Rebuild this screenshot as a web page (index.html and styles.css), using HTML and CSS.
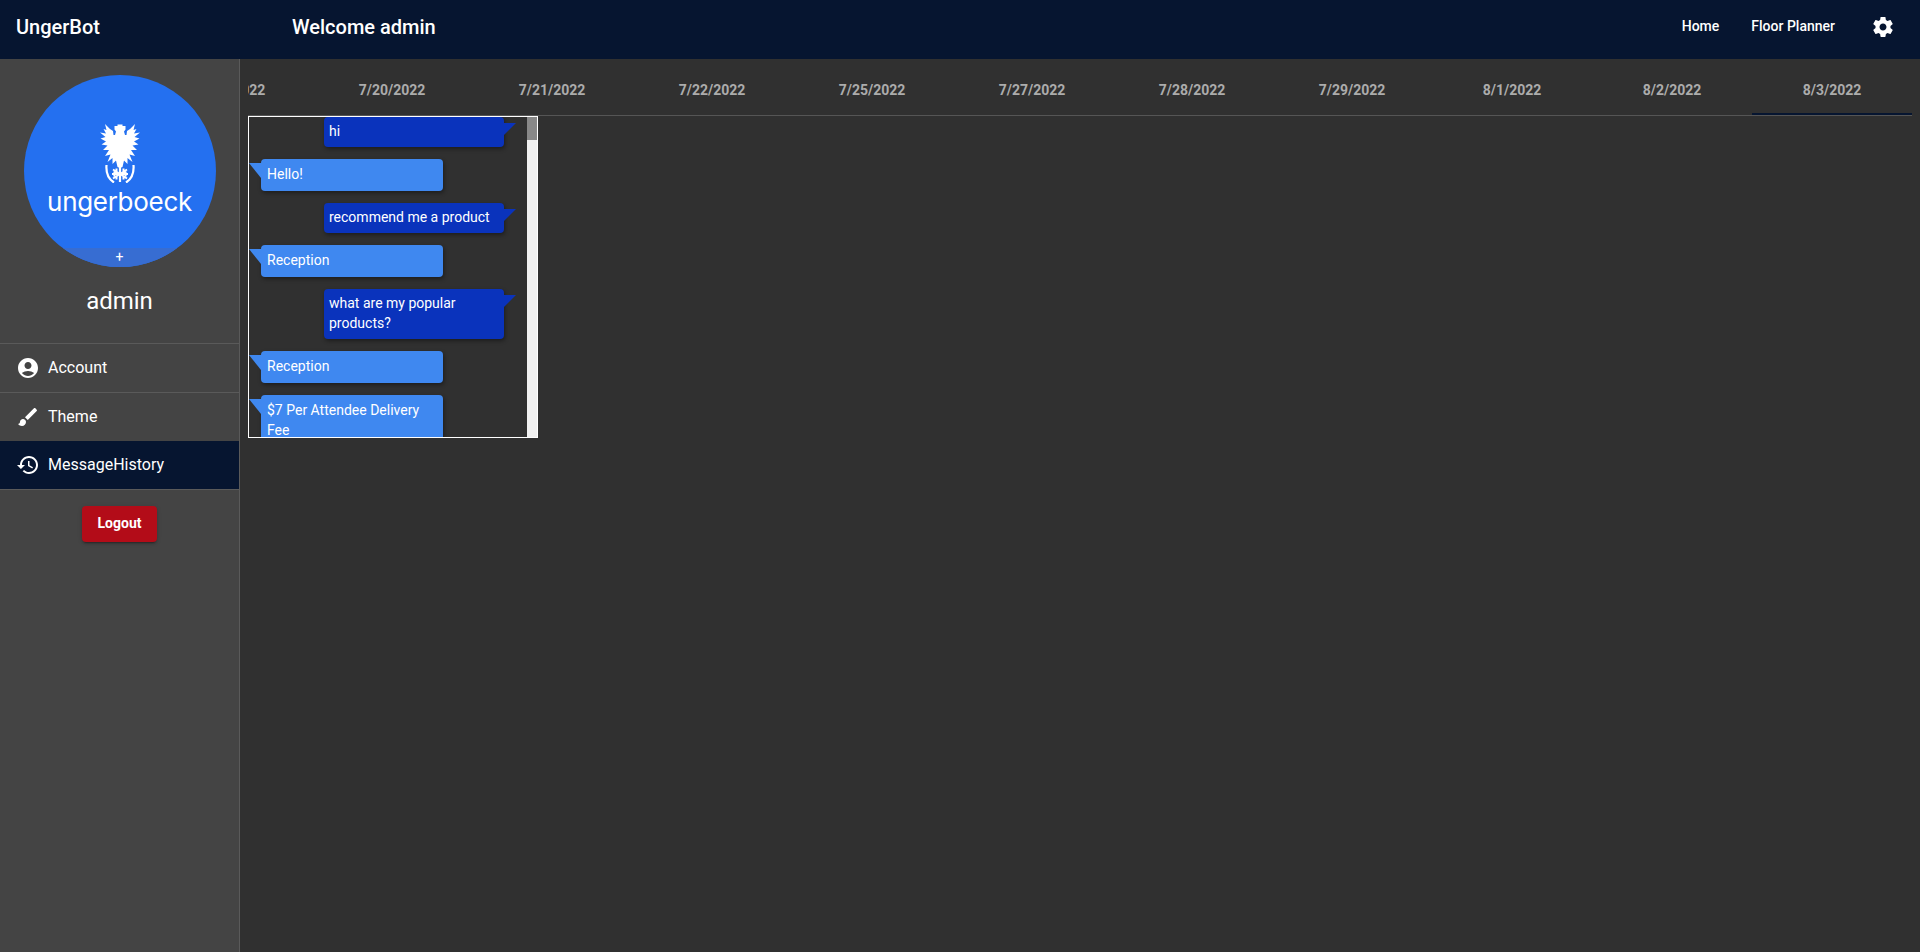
FILE: index.html
```html
<!doctype html>
<html lang="en">
<head>
  <meta charset="UTF-8"/>
  <meta name="viewport" content="width=device-width, initial-scale=1.0"/>
  <title>UngerBot</title>
  <link rel="stylesheet" href="styles.css">
</head>
<body>
  <header class="topbar">
    <div class="brand">UngerBot</div>
    <div class="welcome">Welcome admin</div>
    <nav class="top-links">
      <a class="top-link">Home</a>
      <a class="top-link">Floor Planner</a>
      <svg class="gear" viewBox="0 0 24 24"><path d="M19.43 12.98c.04-.32.07-.64.07-.98s-.03-.66-.07-.98l2.11-1.65c.19-.15.24-.42.12-.64l-2-3.46c-.12-.22-.39-.3-.61-.22l-2.49 1c-.52-.4-1.08-.73-1.69-.98l-.38-2.65C14.46 2.18 14.25 2 14 2h-4c-.25 0-.46.18-.49.42l-.38 2.65c-.61.25-1.17.59-1.69.98l-2.49-1c-.23-.09-.49 0-.61.22l-2 3.46c-.13.22-.07.49.12.64l2.11 1.65c-.04.32-.07.65-.07.98s.03.66.07.98l-2.11 1.65c-.19.15-.24.42-.12.64l2 3.46c.12.22.39.3.61.22l2.49-1c.52.4 1.08.73 1.69.98l.38 2.65c.03.24.24.42.49.42h4c.25 0 .46-.18.49-.42l.38-2.65c.61-.25 1.17-.59 1.69-.98l2.49 1c.23.09.49 0 .61-.22l2-3.46c.12-.22.07-.49-.12-.64l-2.11-1.65zM12 15.5c-1.93 0-3.5-1.57-3.5-3.5s1.57-3.5 3.5-3.5 3.5 1.57 3.5 3.5-1.57 3.5-3.5 3.5z"/></svg>
    </nav>
  </header>

  <div class="page">
    <aside class="sidebar">
      <div class="avatar">
        <svg class="eagle" viewBox="0 0 40 60">
          <defs>
            <g id="eagleHalf">
              <path d="M20 1.500L17.500 1.500L17.500 3L14.500 3L14.500 6.500L16 8.500L15 12L13.500 12L13 8L10 6L5 1L6.500 7L3.500 6L6 10.500L0 9.500L5.500 14L0.500 15.500L6 18.500L1.500 21.500L7.500 22.500L3 27L9 27L5 33L10.500 31.500L7.500 39L12.500 35L12.500 41L16 37.500L17.500 44L20 45Z" fill="#fff"/>
              <path d="M6.500 42Q5.500 54 14 59.500" fill="none" stroke="#fff" stroke-width="2.200"/>
              <path d="M20 51L13 46.500M20 51L13 55.500M20 51L12 51M16.500 48.500L16.500 45.500M16.500 53.500L16.500 56.500M15 51L14 48.500M15 51L14 53.500" fill="none" stroke="#fff" stroke-width="2"/>
            </g>
          </defs>
          <use href="#eagleHalf"/>
          <use href="#eagleHalf" transform="matrix(-1 0 0 1 40 0)"/>
          <path d="M20 44V59" stroke="#fff" stroke-width="2.200"/>
        </svg>
        <div class="wordmark">ungerboeck</div>
        <div class="avatar-add">+</div>
      </div>
      <div class="username">admin</div>
      <ul class="side-nav">
        <li class="side-item">
          <svg class="side-icon" viewBox="0 0 24 24"><path d="M12 2C6.48 2 2 6.48 2 12s4.48 10 10 10 10-4.48 10-10S17.52 2 12 2zm0 4c1.93 0 3.5 1.57 3.5 3.5S13.93 13 12 13s-3.5-1.57-3.5-3.5S10.07 6 12 6zm0 14c-2.03 0-4.43-.82-6.14-2.88C7.55 15.8 9.68 15 12 15s4.45.8 6.14 2.12C16.43 19.18 14.03 20 12 20z"/></svg>
          <span class="side-label">Account</span>
        </li>
        <li class="side-item">
          <svg class="side-icon" viewBox="0 0 24 24"><path d="M7 14c-1.66 0-3 1.34-3 3 0 1.31-1.16 2-2 2 .92 1.22 2.49 2 4 2 2.21 0 4-1.79 4-4 0-1.66-1.34-3-3-3zm13.71-9.37l-1.34-1.34c-.39-.39-1.02-.39-1.41 0L9 12.25 11.75 15l8.96-8.96c.39-.39.39-1.02 0-1.41z"/></svg>
          <span class="side-label">Theme</span>
        </li>
        <li class="side-item active">
          <svg class="side-icon" viewBox="0 0 24 24"><path d="M13 3c-4.97 0-9 4.03-9 9H1l3.89 3.89.07.14L9 12H6c0-3.87 3.13-7 7-7s7 3.13 7 7-3.13 7-7 7c-1.93 0-3.68-.79-4.94-2.06l-1.42 1.42C8.27 19.99 10.51 21 13 21c4.97 0 9-4.03 9-9s-4.03-9-9-9zm-1 5v5l4.28 2.54.72-1.21-3.5-2.08V8H12z"/></svg>
          <span class="side-label">MessageHistory</span>
        </li>
      </ul>
      <button class="logout">Logout</button>
    </aside>

    <main class="content">
      <div class="tabs">
        <div class="tab">7/19/2022</div>
        <div class="tab">7/20/2022</div>
        <div class="tab">7/21/2022</div>
        <div class="tab">7/22/2022</div>
        <div class="tab">7/25/2022</div>
        <div class="tab">7/27/2022</div>
        <div class="tab">7/28/2022</div>
        <div class="tab">7/29/2022</div>
        <div class="tab">8/1/2022</div>
        <div class="tab">8/2/2022</div>
        <div class="tab selected">8/3/2022</div>
      </div>

      <div class="chat">
        <div class="messages">
          <div class="msg user">hi</div>
          <div class="msg bot">Hello!</div>
          <div class="msg user">recommend me a product</div>
          <div class="msg bot">Reception</div>
          <div class="msg user">what are my popular products?</div>
          <div class="msg bot">Reception</div>
          <div class="msg bot">$7 Per Attendee Delivery Fee</div>
        </div>
        <div class="scrollbar"><div class="thumb"></div></div>
      </div>
    </main>
  </div>
</body>
</html>
```

FILE: styles.css
```css
* {
  box-sizing: border-box;
}

body {
  margin: 0;
  height: 100vh;
  display: flex;
  flex-direction: column;
  overflow: hidden;
  background: #303030;
  color: #fff;
  font-family: Roboto, sans-serif;
}

.topbar {
  height: 59px;
  flex-shrink: 0;
  display: flex;
  align-items: center;
  padding: 0 25px 5px 16px;
  background: #061530;
}

.brand {
  width: 276px;
  font-size: 20px;
  font-weight: 500;
}

.welcome {
  font-size: 20px;
  font-weight: 500;
}

.top-links {
  margin-left: auto;
  display: flex;
  align-items: center;
  font-size: 14px;
  font-weight: 500;
}

.top-link {
  margin-right: 32px;
  margin-bottom: 2px;
}

.top-link + .top-link {
  margin-right: 36px;
}

.gear {
  width: 24px;
  height: 24px;
  fill: #fff;
}

.page {
  flex: 1;
  display: flex;
  min-height: 0;
}

.sidebar {
  width: 240px;
  flex-shrink: 0;
  display: flex;
  flex-direction: column;
  align-items: center;
  padding-top: 16px;
  background: #444;
  border-right: 1px solid #5a5a5a;
}

.avatar {
  position: relative;
  width: 192px;
  height: 192px;
  flex-shrink: 0;
  display: flex;
  flex-direction: column;
  align-items: center;
  padding-top: 48px;
  border-radius: 50%;
  overflow: hidden;
  background: #2470f0;
}

.eagle {
  width: 40px;
  height: 60px;
  flex-shrink: 0;
}

.wordmark {
  margin-top: 2px;
  font-family: Inter, sans-serif;
  font-size: 26px;
  font-weight: 400;
  line-height: 33px;
  letter-spacing: -0.3px;
}

.avatar-add {
  position: absolute;
  left: 0;
  right: 0;
  bottom: 0;
  height: 19px;
  background: #376dd2;
  font-size: 14px;
  line-height: 19px;
  text-align: center;
}

.username {
  margin-top: 16px;
  height: 60px;
  font-size: 24px;
  line-height: 36px;
}

.side-nav {
  width: 100%;
  margin: 0;
  padding: 0;
  list-style: none;
}

.side-item {
  height: 49px;
  display: flex;
  align-items: center;
  gap: 8px;
  padding: 0 16px;
  border-top: 1px solid #5a5a5a;
  font-size: 16px;
}

.side-item.active {
  border-top: none;
  border-bottom: 1px solid #5a5a5a;
  background: #061530;
}

.side-label {
  margin-bottom: 2px;
}

.side-icon {
  width: 24px;
  height: 24px;
  fill: #fff;
}

.logout {
  margin-top: 16px;
  height: 36px;
  padding: 0 16px 2px;
  border: none;
  border-radius: 4px;
  background: #b30c18;
  color: #fff;
  font-family: Roboto, sans-serif;
  font-size: 14px;
  font-weight: 700;
  box-shadow: 0 3px 1px -2px rgba(0,0,0,0.2), 0 2px 2px 0 rgba(0,0,0,0.14), 0 1px 5px 0 rgba(0,0,0,0.12);
}

.content {
  flex: 1;
  min-width: 0;
  padding: 7px 8px 0;
}

.tabs {
  height: 50px;
  display: flex;
  justify-content: flex-end;
  overflow: hidden;
  border-bottom: 1px solid #555;
}

.tab {
  width: 160px;
  height: 49px;
  flex-shrink: 0;
  font-size: 14px;
  font-weight: 700;
  line-height: 48px;
  text-align: center;
  color: #acacac;
}

.tab.selected {
  border-bottom: 2px solid #061530;
}

.chat {
  width: 290px;
  height: 322px;
  display: flex;
  border: 1px solid #fff;
}

.messages {
  flex: 1;
  display: flex;
  flex-direction: column;
  align-items: flex-start;
  gap: 12px;
  overflow: hidden;
  min-width: 0;
}

.msg {
  position: relative;
  flex-shrink: 0;
  border-radius: 4px;
  font-size: 14px;
  line-height: 20px;
  box-shadow: 1px 2px 4px rgba(0,0,0,0.4);
}

.msg.user {
  width: 180px;
  margin-left: 75px;
  padding: 4px 5px 6px;
  background: #0a33bc;
}

.msg.user::after {
  content: "";
  position: absolute;
  top: 6px;
  left: 100%;
  border-top: 12px solid #0a33bc;
  border-right: 12px solid transparent;
}

.msg.bot {
  width: 182px;
  margin-left: 12px;
  padding: 5px 6px 7px;
  background: #3f88f0;
}

.msg.bot::before {
  content: "";
  position: absolute;
  top: 4px;
  right: 100%;
  border-top: 15px solid #3f88f0;
  border-left: 12px solid transparent;
}

.scrollbar {
  width: 10px;
  flex-shrink: 0;
  background: #f1f1f1;
}

.thumb {
  height: 23px;
  background: #888;
}
```
